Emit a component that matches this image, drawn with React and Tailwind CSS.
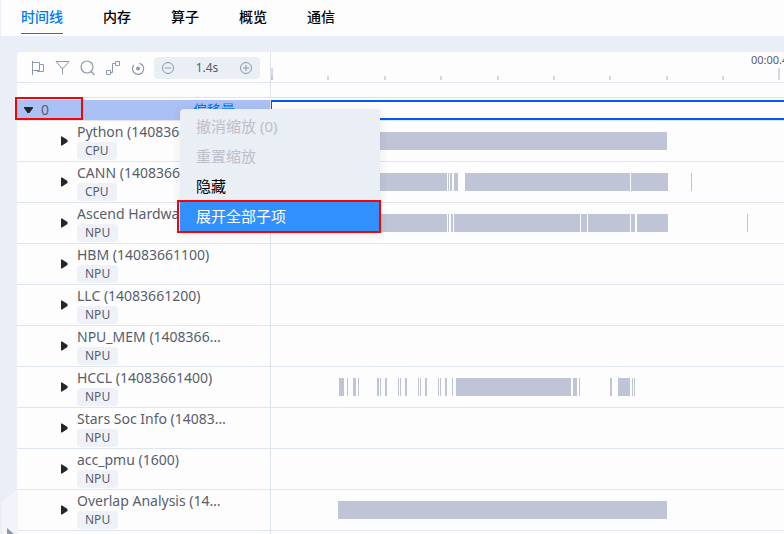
import React, { useState } from "react";
import clsx from "clsx";

const tabs = ["时间线", "内存", "算子", "概览", "通信"];

// x offsets inside the lane, [start, width]
const units = [
  { name: "Python (14083661056)", tag: "CPU", bars: [[67, 329]] },
  {
    name: "CANN (14083661057)",
    tag: "CPU",
    bars: [[67, 109], [177, 1], [179, 2], [183, 4], [194, 165], [360, 37], [420, 1]],
  },
  {
    name: "Ascend Hardware (1408366)",
    tag: "NPU",
    bars: [
      [67, 109], [177, 1], [180, 2], [183, 126], [310, 6], [317, 42],
      [360, 4], [366, 31], [476, 1],
    ],
  },
  { name: "HBM (14083661100)", tag: "NPU", bars: [] },
  { name: "LLC (14083661200)", tag: "NPU", bars: [] },
  { name: "NPU_MEM (14083661300)", tag: "NPU", bars: [] },
  {
    name: "HCCL (14083661400)",
    tag: "NPU",
    bars: [
      [68, 5], [76, 1], [82, 3], [87, 1], [106, 2], [109, 1], [114, 2],
      [127, 1], [129, 1], [134, 2], [147, 1], [149, 1], [154, 2],
      [167, 1], [169, 1], [174, 2], [181, 1], [185, 115], [302, 4],
      [308, 1], [339, 2], [347, 12], [361, 1], [363, 1],
    ],
  },
  { name: "Stars Soc Info (14083661500)", tag: "NPU", bars: [] },
  { name: "acc_pmu (1600)", tag: "NPU", bars: [] },
  { name: "Overlap Analysis (14083661700)", tag: "NPU", bars: [[67, 329]] },
];

const ticks = [56, 113, 169, 226, 282, 338, 395, 451];

function Icon({ children }) {
  return (
    <svg
      className="block"
      width="16"
      height="16"
      viewBox="0 0 16 16"
      fill="none"
      stroke="#8d98aa"
      aria-hidden="true"
    >
      {children}
    </svg>
  );
}

function Toolbar() {
  return (
    <div className="flex h-[30px] items-center pt-[2px] pl-[13px]">
      <div className="flex gap-[9px]">
        <button aria-label="Flag">
          <Icon>
            <path d="M2.5 1v14M2.5 2.5h7v8h-7M9.5 4.5h4v7h-6v-1" />
          </Icon>
        </button>
        <button aria-label="Filter">
          <Icon>
            <path d="M1 1.500h13L8.500 8h-2L1 1.500zM7.500 8v6.500" />
          </Icon>
        </button>
        <button aria-label="Search">
          <Icon>
            <circle cx="7" cy="7" r="6" strokeWidth="1.2" />
            <path d="M11 11.5l3.500 3.500" strokeWidth="1.2" />
          </Icon>
        </button>
        <button aria-label="Link">
          <Icon>
            <path d="M1.500 10.500h4v4h-4zM10.500 1.500h4v4h-4zM5.500 12.500h2v-9h3" />
          </Icon>
        </button>
        <button aria-label="Reset">
          <Icon>
            <path d="M9.500 3.300A5.600 5.600 0 1 1 3.200 6" strokeWidth="1.200" />
            <path d="M2.300 8.500A5.600 5.600 0 0 1 3.800 5" strokeWidth="1.200" strokeDasharray="1.500 1" />
            <circle cx="8" cy="8.500" r="2" fill="#8d98aa" stroke="none" />
          </Icon>
        </button>
      </div>
      <div className="ml-2 flex h-[22px] w-[106px] items-center justify-between rounded bg-[#eaeef5] px-[6px]">
        <button aria-label="Zoom out">
          <Icon>
            <circle cx="8" cy="8" r="5.500" />
            <path d="M5 8h6" />
          </Icon>
        </button>
        <span className="text-[12px] leading-4">1.4s</span>
        <button aria-label="Zoom in">
          <Icon>
            <circle cx="8" cy="8" r="5.500" />
            <path d="M5 8h6M8 5v6" />
          </Icon>
        </button>
      </div>
    </div>
  );
}

function Ruler() {
  return (
    <svg className="block h-[30px] w-full" shapeRendering="crispEdges">
      <g fill="#d3d9e5">
        <rect x="0" y="16" width="2" height="8" />
        <rect x="0" y="24" width="2" height="4" fill="#bfc6da" />
        {ticks.map((x) => (
          <rect key={x} x={x} y="24" width="2" height="4" />
        ))}
        <rect x="507" y="16" width="2" height="12" />
      </g>
      <text x="480" y="12" fontSize="11" fill="#575d6c">
        00:00.400
      </text>
    </svg>
  );
}

function UnitRow({ unit }) {
  return (
    <li className="grid h-[41px] grid-cols-[254px_1fr] border-b border-[#dfe5ef]">
      <div className="flex items-center border-r border-[#dfe5ef] pl-11">
        <button aria-label="Expand" className="w-4">
          <svg className="block" width="8" height="10" viewBox="0 0 8 10">
            <path d="M0 0.500h1L6.500 4v2L1 9.500H0z" fill="#22252b" />
          </svg>
        </button>
        <div className="w-[151px]">
          <div className="truncate text-[14px] leading-5">{unit.name}</div>
          <span className="block h-[18px] w-fit rounded bg-[#eff1f9] px-2 text-[12px] leading-[18px]">
            {unit.tag}
          </span>
        </div>
      </div>
      <svg className="block h-10 w-full" shapeRendering="crispEdges">
        {unit.bars.map(([x, width]) => (
          <rect key={x} x={x} y="11" width={width} height="18" fill="#bfc5d6" />
        ))}
      </svg>
    </li>
  );
}

function ContextMenu() {
  return (
    <div
      role="menu"
      className="absolute top-[109px] left-[180px] flex w-[200px] flex-col rounded bg-[#eaeef5] pt-[3px] text-[15px] leading-7 shadow-[0_2px_6px_4px_rgba(0,0,0,0.04)]"
    >
      <button role="menuitem" disabled className="h-[30px] px-4 pb-[2px] text-left text-[#bdc0c8]">
        撤消缩放 (0)
      </button>
      <button role="menuitem" disabled className="h-[30px] px-4 pb-[2px] text-left text-[#bdc0c8]">
        重置缩放
      </button>
      <button role="menuitem" className="h-[30px] px-4 pb-[2px] text-left text-black">
        隐藏
      </button>
      <button role="menuitem" className="relative h-[30px] bg-[#3290ff] px-4 pb-[2px] text-left text-white">
        展开全部子项
        <span className="absolute -top-[2px] -right-[1px] -bottom-[1px] -left-[3px] border-2 border-[#ff0000]" />
      </button>
    </div>
  );
}

export default function App() {
  const [active, setActive] = useState("时间线");

  return (
    <div className="relative flex h-screen flex-col overflow-hidden bg-[#eaeef7] font-['Noto_Sans','Noto_Sans_CJK_SC',sans-serif] text-[#575d6c]">
      <nav className="ml-px flex h-9 shrink-0 gap-10 bg-[#fdfdfe] pl-5">
        {tabs.map((tab) => (
          <button
            key={tab}
            onClick={() => setActive(tab)}
            className={clsx(
              "h-[34px] border-b text-[14px] font-medium",
              active === tab
                ? "border-[#0077ff] text-[#0077ff]"
                : "border-transparent text-black"
            )}
          >
            {tab}
          </button>
        ))}
      </nav>

      <main className="mt-4 ml-[17px] flex-1 rounded-tl bg-[#fdfdfe]">
        <div className="grid grid-cols-[254px_1fr] border-b border-[#dfe5ef]">
          <div className="border-r border-[#dfe5ef]">
            <Toolbar />
          </div>
          <Ruler />
        </div>
        <div className="grid h-[15px] grid-cols-[254px_1fr] border-b border-[#dfe5ef]">
          <div className="border-r border-[#dfe5ef]" />
        </div>

        <div className="mt-[2px] grid h-[21px] grid-cols-[254px_1fr] border-b border-[#dfe5ef]">
          <div className="relative flex items-center justify-between border-r border-[#dfe5ef] bg-[#abc1f5] pr-[35px] pl-[7px]">
            <div className="flex items-center gap-2">
              <button aria-label="Collapse">
                <svg className="block" width="9" height="6" viewBox="0 0 9 6">
                  <path d="M0 0h9v1L5.500 6h-2L0 1z" fill="#22252b" />
                </svg>
              </button>
              <span className="text-[14px] leading-5">0</span>
            </div>
            <a href="#offset" className="text-[14px] leading-5 text-[#0077ff]">
              偏移量
            </a>
            <span className="absolute -top-[3px] -left-[2px] h-[23px] w-[68px] border-2 border-[#ff0000]" />
          </div>
          <div className="border-y-2 border-l border-[#0058f5]" />
        </div>

        <ul>
          {units.map((unit) => (
            <UnitRow key={unit.name} unit={unit} />
          ))}
        </ul>
        <div className="h-[41px] w-[254px] border-r border-[#dfe5ef]" />
      </main>

      <button aria-label="Toggle panel" className="absolute top-[489px] left-[2px]">
        <svg className="block" width="16" height="90" viewBox="0 0 16 90">
          <path d="M16 0v90L0 78V12z" fill="#f2f4fa" />
          <path d="M5 39l7 6-7 6z" fill="#8d98aa" />
        </svg>
      </button>

      <ContextMenu />
    </div>
  );
}
